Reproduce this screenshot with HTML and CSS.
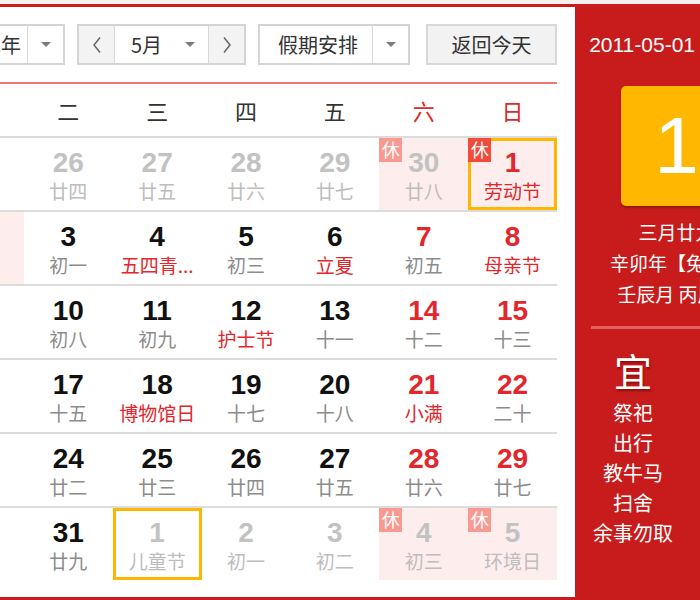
FILE: index.html
```html
<!DOCTYPE html>
<html lang="zh-CN">
<head>
<meta charset="utf-8">
<title>万年历</title>
<link rel="stylesheet" href="styles.css">
</head>
<body>
<div class="widget">
  <div class="main">
    <div class="toolbar">
      <div class="select year">
        <span class="sel-text">2011年</span>
        <span class="sel-arrow"><i class="tri"></i></span>
      </div>
      <div class="month-group">
        <span class="nav"><svg width="10" height="18" viewBox="0 0 10 18"><polyline points="8,1.5 2,9 8,16.5" fill="none" stroke="#666" stroke-width="1.5"/></svg></span>
        <span class="month"><span class="month-text">5月</span><i class="tri"></i></span>
        <span class="nav"><svg width="10" height="18" viewBox="0 0 10 18"><polyline points="2,1.5 8,9 2,16.5" fill="none" stroke="#666" stroke-width="1.5"/></svg></span>
      </div>
      <div class="select holiday">
        <span class="sel-text">假期安排</span>
        <span class="sel-arrow"><i class="tri"></i></span>
      </div>
      <span class="today-btn">返回今天</span>
    </div>

    <div class="weekhead">
      <span>一</span><span>二</span><span>三</span><span>四</span><span>五</span><span class="we">六</span><span class="we">日</span>
    </div>

    <div class="weeks">
      <div class="week">
        <div class="day other"><div class="num">25</div><div class="lunar">廿三</div></div>
        <div class="day other"><div class="num">26</div><div class="lunar">廿四</div></div>
        <div class="day other"><div class="num">27</div><div class="lunar">廿五</div></div>
        <div class="day other"><div class="num">28</div><div class="lunar">廿六</div></div>
        <div class="day other"><div class="num">29</div><div class="lunar">廿七</div></div>
        <div class="day other rest"><span class="badge">休</span><div class="num">30</div><div class="lunar">廿八</div></div>
        <div class="day rest red sel"><span class="badge">休</span><div class="num">1</div><div class="lunar fest">劳动节</div></div>
      </div>
      <div class="week">
        <div class="day rest red"><span class="badge">休</span><div class="num">2</div><div class="lunar">三十</div></div>
        <div class="day"><div class="num">3</div><div class="lunar">初一</div></div>
        <div class="day"><div class="num">4</div><div class="lunar fest">五四青...</div></div>
        <div class="day"><div class="num">5</div><div class="lunar">初三</div></div>
        <div class="day"><div class="num">6</div><div class="lunar fest">立夏</div></div>
        <div class="day red"><div class="num">7</div><div class="lunar">初五</div></div>
        <div class="day red"><div class="num">8</div><div class="lunar fest">母亲节</div></div>
      </div>
      <div class="week">
        <div class="day"><div class="num">9</div><div class="lunar">初七</div></div>
        <div class="day"><div class="num">10</div><div class="lunar">初八</div></div>
        <div class="day"><div class="num">11</div><div class="lunar">初九</div></div>
        <div class="day"><div class="num">12</div><div class="lunar fest">护士节</div></div>
        <div class="day"><div class="num">13</div><div class="lunar">十一</div></div>
        <div class="day red"><div class="num">14</div><div class="lunar">十二</div></div>
        <div class="day red"><div class="num">15</div><div class="lunar">十三</div></div>
      </div>
      <div class="week">
        <div class="day"><div class="num">16</div><div class="lunar">十四</div></div>
        <div class="day"><div class="num">17</div><div class="lunar">十五</div></div>
        <div class="day"><div class="num">18</div><div class="lunar fest">博物馆日</div></div>
        <div class="day"><div class="num">19</div><div class="lunar">十七</div></div>
        <div class="day"><div class="num">20</div><div class="lunar">十八</div></div>
        <div class="day red"><div class="num">21</div><div class="lunar fest">小满</div></div>
        <div class="day red"><div class="num">22</div><div class="lunar">二十</div></div>
      </div>
      <div class="week">
        <div class="day"><div class="num">23</div><div class="lunar">廿一</div></div>
        <div class="day"><div class="num">24</div><div class="lunar">廿二</div></div>
        <div class="day"><div class="num">25</div><div class="lunar">廿三</div></div>
        <div class="day"><div class="num">26</div><div class="lunar">廿四</div></div>
        <div class="day"><div class="num">27</div><div class="lunar">廿五</div></div>
        <div class="day red"><div class="num">28</div><div class="lunar">廿六</div></div>
        <div class="day red"><div class="num">29</div><div class="lunar">廿七</div></div>
      </div>
      <div class="week">
        <div class="day"><div class="num">30</div><div class="lunar">廿八</div></div>
        <div class="day"><div class="num">31</div><div class="lunar">廿九</div></div>
        <div class="day other sel"><div class="num">1</div><div class="lunar">儿童节</div></div>
        <div class="day other"><div class="num">2</div><div class="lunar">初一</div></div>
        <div class="day other"><div class="num">3</div><div class="lunar">初二</div></div>
        <div class="day other rest"><span class="badge">休</span><div class="num">4</div><div class="lunar">初三</div></div>
        <div class="day other rest"><span class="badge">休</span><div class="num">5</div><div class="lunar">环境日</div></div>
      </div>
    </div>
  </div>

  <div class="side">
    <div class="side-date">2011-05-01 星期日</div>
    <div class="big-day">1</div>
    <div class="side-info">
      <div>三月廿九</div>
      <div>辛卯年【兔年】</div>
      <div>壬辰月 丙辰日</div>
    </div>
    <div class="side-sep"></div>
    <div class="yiji">
      <div class="yj-col">
        <div class="yj-title">宜</div>
        <div class="yj-item">祭祀</div>
        <div class="yj-item">出行</div>
        <div class="yj-item">教牛马</div>
        <div class="yj-item">扫舍</div>
        <div class="yj-item">余事勿取</div>
      </div>
      <div class="yj-col ji">
        <div class="yj-title">忌</div>
        <div class="yj-item">诸事不宜</div>
      </div>
    </div>
  </div>
</div>
</body>
</html>
```

FILE: styles.css
```css
html, body {
  margin: 0;
  padding: 0;
}
body {
  background: #f6efef;
  overflow: hidden;
  width: 700px;
  height: 600px;
  font-family: "Noto Sans CJK SC", "Liberation Sans", sans-serif;
}

.widget {
  display: flex;
  width: max-content;
  margin: 4px 0 0 -86px;
  border: 3px solid #c81b1b;
  background: #fff;
}

/* ---------- left calendar ---------- */
.main {
  width: 622px;
  padding: 17px 18px 17px 18px;
  background: #fff;
}

.toolbar {
  display: flex;
  gap: 12px;
  height: 41px;
  font-size: 20px;
  color: #333;
}

.select {
  display: flex;
  box-sizing: border-box;
  height: 41px;
  border: 2px solid #d4d4d4;
  background: #fff;
}
.select .sel-text {
  flex: 1;
  line-height: 37px;
}
.select .sel-arrow {
  width: 35px;
  border-left: 1px solid #dadada;
  display: flex;
  align-items: center;
  justify-content: center;
}
.year { width: 130px; }
.year .sel-text {
  text-align: right;
  padding-right: 6px;
}
.holiday { width: 152px; }
.holiday .sel-text { padding-left: 18px; }

.tri {
  display: block;
  width: 0;
  height: 0;
  border-left: 5px solid transparent;
  border-right: 5px solid transparent;
  border-top: 5px solid #7c7c7c;
}

.month-group {
  display: flex;
  box-sizing: border-box;
  width: 169px;
  height: 41px;
  border: 2px solid #d4d4d4;
}
.nav {
  width: 35px;
  background: #f3f3f3;
  display: flex;
  align-items: center;
  justify-content: center;
}
.month {
  box-sizing: border-box;
  width: 95px;
  border-left: 1px solid #d8d8d8;
  border-right: 1px solid #d8d8d8;
  display: flex;
  align-items: center;
  padding: 0 13px 0 16px;
  background: #fff;
}
.month-text {
  flex: 1;
  line-height: 37px;
}

.today-btn {
  margin-left: auto;
  box-sizing: border-box;
  width: 131px;
  height: 41px;
  border: 2px solid #d8d8d8;
  background: #f2f2f2;
  text-align: center;
  line-height: 37px;
}

.weekhead {
  display: flex;
  margin-top: 17px;
  border-top: 2px solid #f07575;
  border-bottom: 2px solid #dcdcdc;
  height: 52px;
}
.weekhead span {
  flex: 1;
  text-align: center;
  line-height: 52px;
  font-size: 22px;
  color: #333;
}
.weekhead .we { color: #e0282a; }

.week {
  display: flex;
  border-bottom: 2px solid #dcdcdc;
}
.week:last-child { border-bottom: none; }

.day {
  flex: 1;
  position: relative;
  height: 72px;
  box-sizing: border-box;
  padding-top: 10px;
  text-align: center;
}
.num {
  font-family: "Liberation Sans", Arial, sans-serif;
  font-weight: bold;
  font-size: 28px;
  line-height: 30px;
  color: #111;
}
.lunar {
  font-size: 19px;
  line-height: 26px;
  color: #8c8c8c;
  white-space: nowrap;
}
.red .num { color: #e3262b; }
.fest { color: #e3262b; }

.other .num { color: #c2c2c2; }
.other .lunar { color: #bdbdbd; }

.rest { background: #fdeded; }

.sel::after {
  content: "";
  position: absolute;
  inset: 0;
  border: 3px solid #ffb600;
}

.badge {
  position: absolute;
  top: 0;
  left: 0;
  z-index: 1;
  width: 23px;
  height: 24px;
  background: #f24b3b;
  color: #fff;
  font-size: 18px;
  line-height: 23px;
  text-align: center;
}
.other .badge { background: #f89a91; }

/* ---------- right panel ---------- */
.side {
  width: 203px;
  background: #c81b1b;
  color: #fff;
  text-align: center;
}
.side-date {
  margin-top: 25px;
  font-family: "Liberation Sans", "Noto Sans CJK SC", sans-serif;
  font-size: 21px;
  line-height: 26px;
  white-space: nowrap;
}
.big-day {
  width: 112px;
  height: 120px;
  margin: 28px auto 0;
  border-radius: 5px;
  background: #ffb700;
  box-shadow: 0 2px 2px rgba(90, 20, 0, 0.45);
  font-family: "Liberation Sans", Arial, sans-serif;
  font-size: 80px;
  line-height: 120px;
  color: #fff;
}
.side-info {
  margin-top: 10px;
  font-size: 19px;
  line-height: 31px;
  white-space: nowrap;
}
.side-sep {
  height: 3px;
  margin: 17px 16px 0;
  background: #e4625b;
}
.yiji {
  display: flex;
  padding-left: 18px;
  margin-top: 19px;
}
.yj-col {
  width: 84px;
}
.yj-col.ji { margin-left: 46px; }
.yj-title {
  font-size: 38px;
  line-height: 44px;
  text-shadow: 1px 2px 2px rgba(80, 0, 0, 0.5);
}
.yj-item {
  font-size: 20px;
  line-height: 30px;
  white-space: nowrap;
}
.yj-title + .yj-item { margin-top: 6px; }
```
